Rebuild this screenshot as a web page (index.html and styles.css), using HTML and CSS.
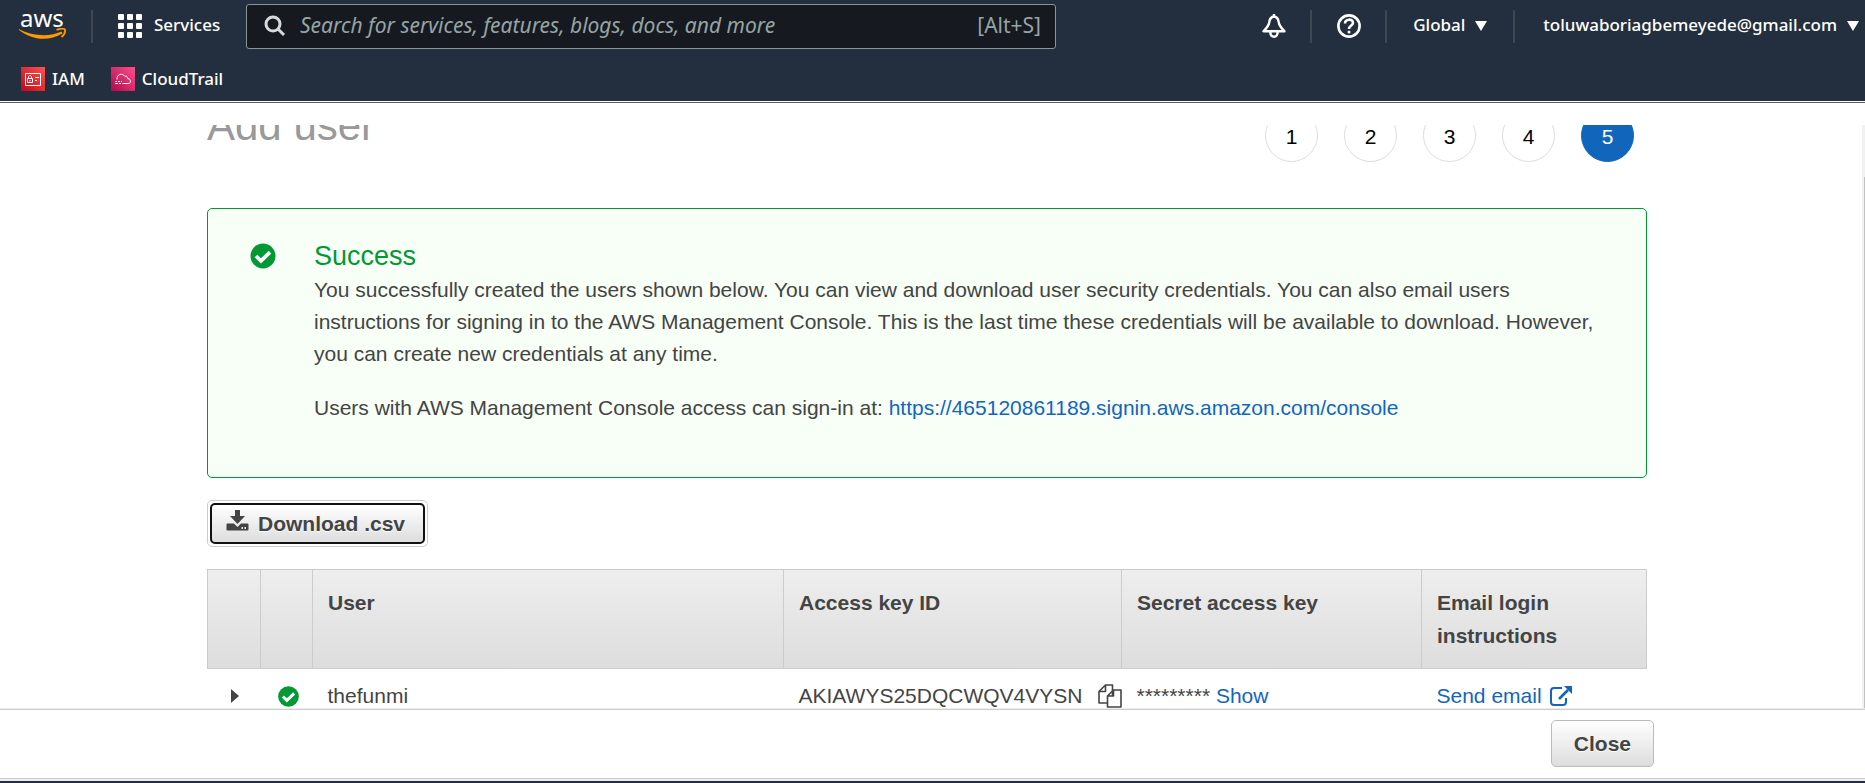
FILE: index.html
```html
<!DOCTYPE html>
<html lang="en">
<head>
<meta charset="utf-8">
<title>IAM Management Console</title>
<link rel="stylesheet" href="styles.css">
</head>
<body>
<div class="app">
<header class="nav">
  <div class="nav-row">
    <a class="logo" href="#" aria-label="AWS home">
      <span class="logo-word">aws</span>
      <svg class="logo-smile" viewBox="0 0 48 12" width="48" height="12"><path d="M0 1C13 8.500 31 9 42.500 3.600L43.500 5.400C30 13.500 13 12.500 0 2Z" fill="#ff9900"/><path d="M37.500 1.800C42 .6 45.500 .6 46 1.600C46.300 3.600 45 7 42.500 9" fill="none" stroke="#ff9900" stroke-width="1.800"/></svg>
    </a>
    <button class="services" type="button">
      <svg viewBox="0 0 24 24" width="24" height="24" fill="#fff"><rect width="6" height="6" rx="1"/><rect x="9" width="6" height="6" rx="1"/><rect x="18" width="6" height="6" rx="1"/><rect y="9" width="6" height="6" rx="1"/><rect x="9" y="9" width="6" height="6" rx="1"/><rect x="18" y="9" width="6" height="6" rx="1"/><rect y="18" width="6" height="6" rx="1"/><rect x="9" y="18" width="6" height="6" rx="1"/><rect x="18" y="18" width="6" height="6" rx="1"/></svg>
      <span class="label">Services</span>
    </button>
    <label class="search">
      <svg viewBox="0 0 22 22" width="22" height="22" fill="none" stroke="#d5dbdb" stroke-width="3"><circle cx="9" cy="9" r="7"/><path d="M14 14l6 6"/></svg>
      <input type="text" placeholder="Search for services, features, blogs, docs, and more" aria-label="Search">
      <span class="label">[Alt+S]</span>
    </label>
    <div class="nav-right">
      <button class="nav-item bell" type="button" aria-label="Notifications">
        <svg viewBox="0 0 24 24" width="24" height="24" fill="none" stroke="#fff" stroke-width="2.400" stroke-linejoin="round"><path d="M12 2.500C9 2.800 7.600 5 7.200 8.500C6.800 12 4.500 14 1.500 17.200H22.500C19.500 14 17.200 12 16.800 8.500C16.400 5 15 2.800 12 2.500Z"/><path d="M12 0v3M8.300 17.500c0 7 7.400 7 7.400 0"/></svg>
      </button>
      <button class="nav-item help" type="button" aria-label="Help">
        <svg viewBox="0 0 24 24" width="24" height="24" fill="none" stroke="#fff" stroke-width="2.600"><circle cx="12" cy="12" r="10.600"/><path d="M8 9.600c0-5.200 8-5 8-.8 0 2.800-4 2.600-4 6.200"/><path d="M12 16.800v2.600"/></svg>
      </button>
      <button class="nav-item region" type="button"><span class="label">Global</span><i class="caret"></i></button>
      <button class="nav-item account" type="button"><span class="label">toluwaboriagbemeyede@gmail.com</span><i class="caret"></i></button>
    </div>
  </div>
  <nav class="favs">
    <a href="#"><svg viewBox="0 0 24 24" width="24" height="24"><defs><linearGradient id="gi" x1="0" y1="1" x2="1" y2="0"><stop stop-color="#bd0816"/><stop offset="1" stop-color="#ff5252"/></linearGradient></defs><rect width="24" height="24" fill="url(#gi)"/><g fill="none" stroke="#fff"><path d="M4.500 6.500h15v12h-15zM6.500 11.500h5v4h-5zM7.500 11.500v-1.500c0-2 3-2 3 0v1.500M9 13v1.500M14 10.500h4M14 13.500h2"/></g></svg><span>IAM</span></a>
    <a href="#"><svg viewBox="0 0 24 24" width="24" height="24"><defs><linearGradient id="gc" x1="0" y1="1" x2="1" y2="0"><stop stop-color="#b0084d"/><stop offset="1" stop-color="#ff4f8b"/></linearGradient></defs><rect width="24" height="24" fill="url(#gc)"/><g fill="none" stroke="#fff"><path d="M6 12.500C5.500 7 11.500 5.500 14 9.500C15.500 8.500 16.500 9.500 16.500 11.500C20.500 12 20.500 16.500 17 16.500H11.500"/><path d="M4.500 14.500h1.500M7 14.500h2M10 14.500h1M4 16.500h3M8 16.500h2"/></g></svg><span>CloudTrail</span></a>
  </nav>
</header>
<div class="viewport">
<main class="scroller">
  <div class="page">
    <div class="title-row">
      <h1>Add user</h1>
      <ol class="steps"><li>1</li><li>2</li><li>3</li><li>4</li><li class="on">5</li></ol>
    </div>
    <section class="alert">
      <svg viewBox="0 0 26 26" width="26" height="26"><circle cx="13" cy="13" r="12.500" fill="#093"/><path d="M6 13l5 4.800L20 9.200" fill="none" stroke="#fff" stroke-width="3.800"/></svg>
      <div>
        <h2>Success</h2>
        <p>You successfully created the users shown below. You can view and download user security credentials. You can also email users instructions for signing in to the AWS Management Console. This is the last time these credentials will be available to download. However, you can create new credentials at any time.</p>
        <p>Users with AWS Management Console access can sign-in at: <a href="#">https://465120861189.signin.aws.amazon.com/console</a></p>
      </div>
    </section>
    <button class="btn download" type="button"><span class="ring"><svg viewBox="0 0 23 21" width="23" height="21" fill="#444"><path d="M9 0h5v6h5l-7.500 8L4 6h5z"/><path fill-rule="evenodd" d="M1.500 13.500h6.500l3.500 3.500 3.500-3.500h6.500q1 0 1 1v5q0 1-1 1h-20q-1 0-1-1v-5q0-1 1-1zM15.500 17v2h1.500v-2zM18.500 17v2h1.500v-2z"/></svg><span>Download .csv</span></span></button>
    <table class="users">
      <colgroup><col class="c1"><col class="c2"><col class="c3"><col class="c4"><col class="c5"><col class="c6"></colgroup>
      <thead><tr><th></th><th></th><th>User</th><th>Access key ID</th><th>Secret access key</th><th>Email login instructions</th></tr></thead>
      <tbody><tr>
        <td><button class="plain expand" type="button" aria-label="Expand"><svg viewBox="0 0 8 14" width="8" height="14"><path d="M0 0l8 7-8 7z" fill="#444"/></svg></button></td>
        <td><svg class="ok" viewBox="0 0 26 26" width="21" height="21"><circle cx="13" cy="13" r="12.800" fill="#093"/><path d="M6 13l5 4.800L20 9.200" fill="none" stroke="#fff" stroke-width="3.800"/></svg></td>
        <td>thefunmi</td>
        <td><span class="cell">AKIAWYS25DQCWQV4VYSN <button class="plain" type="button" aria-label="Copy"><svg viewBox="0 0 24 24" width="24" height="24" fill="#fff" stroke="#444" stroke-width="1.600" stroke-linejoin="round"><path d="M1 7.500L7.500 1H14.500V19H1zM1 7.500H7.500V1"/><path d="M9.500 12L15.500 6H23V23H9.500zM9.500 12H15.500V6"/></svg></button></span></td>
        <td>********* <a href="#">Show</a></td>
        <td><a class="send" href="#">Send email <svg viewBox="0 0 22 20" width="22" height="20" fill="none" stroke="#1166bb" stroke-width="2"><path d="M12 2H4Q1 2 1 5V16Q1 19 4 19H13Q16 19 16 16V12"/><path d="M9 13L18 4" stroke-width="2.600"/><path d="M14 0h8v8z" fill="#1166bb" stroke="none"/></svg></a></td>
      </tr></tbody>
    </table>
  </div>
</main>
<div class="track"><div class="thumb"></div></div>
</div>
<footer class="actions"><button class="btn close" type="button">Close</button></footer>
<div class="base"></div>
</div>
</body>
</html>
```
FILE: styles.css
```css
* { box-sizing: border-box; }
body { margin: 0; background: #fff; color: #444; font: 21px/32px "Liberation Sans", Arial, sans-serif; }
button { font: inherit; cursor: pointer; }
a { color: #1166bb; text-decoration: none; }
svg { display: block; flex: none; }
.app { height: 100vh; display: flex; flex-direction: column; overflow: hidden; }

.nav { flex: none; background: #232f3e; color: #fff; font: 17px/24px "Noto Sans", sans-serif; border-bottom: 1px solid #545b64; }
.nav-row { display: flex; align-items: center; height: 52px; }
.label { padding-bottom: 2px; }
.logo { display: flex; flex-direction: column; width: 93px; height: 33px; padding-left: 19px; color: #fff; border-right: 2px solid #414750; }
.logo-word { font: 24px/16px "Noto Sans", sans-serif; padding-left: 1px; }
.logo-smile { margin-top: 2px; }
.services { display: flex; align-items: center; gap: 12px; width: 153px; padding: 0 0 0 25px; border: 0; background: none; color: #fff; font-weight: 500; }
.search { display: flex; align-items: center; width: 810px; height: 45px; padding: 0 14px 0 17px; background: #16191f; border: 1px solid #879596; border-radius: 3px; color: #95a5a6; font-size: 21px; }
.search input { flex: 1; min-width: 0; margin-left: 14px; padding: 0 0 2px; border: 0; outline: 0; background: none; color: #fff; font: italic 21px/28px "Noto Sans", sans-serif; }
.search input::placeholder { color: #95a5a6; opacity: 1; }
.nav-right { display: flex; margin-left: auto; }
.nav-item { display: flex; align-items: center; justify-content: center; gap: 10px; height: 33px; padding: 0; border: 0; border-right: 2px solid #414750; background: none; color: #fff; font-weight: 500; }
.bell, .help { width: 75px; }
.region { width: 128px; }
.account { border-right: 0; padding: 0 6px 0 28px; }
.caret { border: 6px solid transparent; border-top: 10px solid #fff; border-bottom: 0; }
.favs { display: flex; gap: 26px; padding: 15px 21px 10px; border-bottom: 1px solid #fff; }
.favs a { display: flex; gap: 7px; color: #fff; font-weight: 500; }

.viewport { flex: 1; min-height: 0; margin-top: 22px; display: flex; }
.scroller { flex: 1; min-width: 0; padding: 0 215px 0 207px; overflow: hidden; }
.track { flex: none; width: 3px; padding: 52px 0 0 2px; background: #f1f1f1; }
.thumb { height: 100%; background: #c1c1c1; }
.page { margin-top: -16px; }
.title-row { display: flex; justify-content: space-between; }
h1 { margin: 0; color: #999; font: 42px/34px "Liberation Sans", Arial, sans-serif; }
.steps { display: flex; gap: 26px; margin: 0; padding: 0 13px 0 0; list-style: none; color: #000; }
.steps li { width: 53px; height: 53px; border: 1px solid #ddd; border-radius: 50%; text-align: center; line-height: 53px; }
.steps .on { background: #1166bb; border-color: #1166bb; color: #fff; }
.alert { display: flex; gap: 38px; margin-top: 46px; padding: 30px 50px 31px 42px; min-height: 270px; border: 1px solid #093; border-radius: 5px; background: #f7fff7; }
.alert svg { margin-top: 4px; }
.alert h2 { margin: 0; color: #093; font: 27px/35px "Liberation Sans", Arial, sans-serif; }
.alert p { margin: 0; }
.alert p + p { margin-top: 22px; }
.btn { border: 1px solid #bbb; border-radius: 5px; background: linear-gradient(#fff, #ddd); color: #444; font-weight: bold; text-shadow: 0 1px 1px #fff; }
.download { display: block; margin-top: 22px; padding: 2px; border-color: #ccc; background: #fff; }
.ring { display: flex; align-items: center; gap: 9px; height: 41px; padding: 0 18px 0 14px; border: 2px solid #111; border-radius: 5px; background: linear-gradient(#fff, #ddd); }
.ring svg { margin-bottom: 6px; }
.users { width: 100%; margin-top: 22px; border-collapse: collapse; table-layout: fixed; }
.c1 { width: 53px; } .c2 { width: 52px; } .c3 { width: 471px; } .c4 { width: 338px; } .c5 { width: 300px; }
.users thead { background: linear-gradient(#eee, #ddd); }
.users th { padding: 16px 15px; border: 1px solid #ccc; text-align: left; vertical-align: top; line-height: 33px; }
.users td { padding: 11px 15px 0; vertical-align: top; white-space: nowrap; }
.plain { display: block; padding: 0; border: 0; background: none; }
.expand { margin: 9px 0 0 8px; }
.ok { margin: 6px 0 0 2px; }
.cell, .send { display: flex; gap: 16px; align-items: center; }
.send { gap: 8px; }
.actions { flex: none; display: flex; justify-content: flex-end; padding: 11px 211px 11px; border-top: 1px solid #eee; border-bottom: 1px solid #ccc; box-shadow: inset 0 1px #ccc; }
.close { height: 47px; padding: 0 22px; }
.base { flex: none; height: 4px; border-top: 2px solid #eee; background: #232f3e; }
```
